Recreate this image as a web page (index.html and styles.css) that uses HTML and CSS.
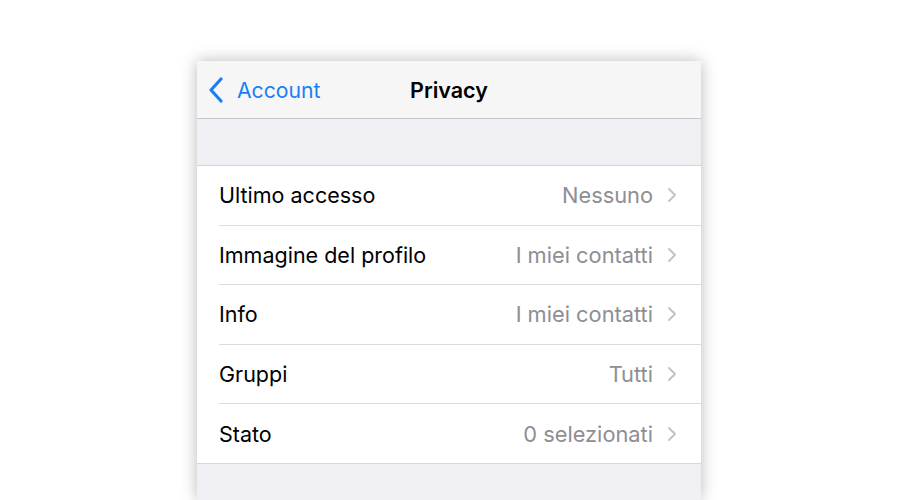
FILE: index.html
```html
<!DOCTYPE html>
<html lang="it">
<head>
<meta charset="utf-8">
<link rel="stylesheet" href="styles.css">
</head>
<body>
<div class="phone">
  <div class="navbar">
    <div class="back">
      <svg class="back-icon" width="18" height="26" viewBox="0 0 18 26"><path d="M14 2 L4 13 L14 24" fill="none" stroke="#1a7ef5" stroke-width="3.2" stroke-linecap="round" stroke-linejoin="round"/></svg>
      <span>Account</span>
    </div>
    <div class="title">Privacy</div>
  </div>
  <div class="spacer"></div>
  <ul class="list">
    <li class="row"><span class="label">Ultimo accesso</span><span class="value">Nessuno</span><svg class="chev" width="10" height="16" viewBox="0 0 10 16"><path d="M2 2 L8 8 L2 14" fill="none" stroke="#c4c4c7" stroke-width="2" stroke-linecap="round" stroke-linejoin="round"/></svg></li>
    <li class="row"><span class="label">Immagine del profilo</span><span class="value">I miei contatti</span><svg class="chev" width="10" height="16" viewBox="0 0 10 16"><path d="M2 2 L8 8 L2 14" fill="none" stroke="#c4c4c7" stroke-width="2" stroke-linecap="round" stroke-linejoin="round"/></svg></li>
    <li class="row"><span class="label">Info</span><span class="value">I miei contatti</span><svg class="chev" width="10" height="16" viewBox="0 0 10 16"><path d="M2 2 L8 8 L2 14" fill="none" stroke="#c4c4c7" stroke-width="2" stroke-linecap="round" stroke-linejoin="round"/></svg></li>
    <li class="row"><span class="label">Gruppi</span><span class="value">Tutti</span><svg class="chev" width="10" height="16" viewBox="0 0 10 16"><path d="M2 2 L8 8 L2 14" fill="none" stroke="#c4c4c7" stroke-width="2" stroke-linecap="round" stroke-linejoin="round"/></svg></li>
    <li class="row"><span class="label">Stato</span><span class="value">0 selezionati</span><svg class="chev" width="10" height="16" viewBox="0 0 10 16"><path d="M2 2 L8 8 L2 14" fill="none" stroke="#c4c4c7" stroke-width="2" stroke-linecap="round" stroke-linejoin="round"/></svg></li>
  </ul>
  <div class="footer"></div>
</div>
</body>
</html>
```
FILE: styles.css
```css
html, body {
  margin: 0;
  padding: 0;
  background: #ffffff;
}
body {
  font-family: Inter, "Liberation Sans", sans-serif;
  height: 500px;
  overflow: hidden;
}
.phone {
  width: 504px;
  margin: 61px 0 0 197px;
  height: 439px;
  background: #efeff4;
  box-shadow: 0 0 15px rgba(0, 0, 0, 0.28);
  display: flex;
  flex-direction: column;
}
.navbar {
  height: 57px;
  flex: none;
  background: #f6f6f6;
  border-bottom: 1px solid #c6c6ca;
  display: flex;
  align-items: center;
  justify-content: center;
  position: relative;
}
.back {
  position: absolute;
  left: 10px;
  top: 0;
  bottom: 0;
  display: flex;
  align-items: center;
  gap: 12px;
  color: #1a7ef5;
  font-size: 21.2px;
}
.back-icon {
  margin-top: 1px;
}
.title {
  font-size: 21.5px;
  font-weight: 600;
  color: #000;
}
.spacer {
  height: 46px;
  flex: none;
  border-bottom: 1px solid #d6d6da;
}
.list {
  list-style: none;
  margin: 0;
  padding: 0 0 0 22px;
  background: #fff;
  border-bottom: 1px solid #d6d6da;
  flex: none;
}
.row {
  box-sizing: border-box;
  height: 59.6px;
  display: flex;
  align-items: center;
  padding-right: 24px;
  border-bottom: 1px solid #dcdce0;
  font-size: 21.5px;
}
.row:last-child {
  border-bottom: none;
  height: 58.6px;
}
.label {
  flex: 1;
  color: #000;
}
.value {
  color: #8e8e93;
  margin-right: 14px;
  font-size: 21.8px;
}
.chev {
  display: block;
}
.footer {
  flex: 1;
}
```
